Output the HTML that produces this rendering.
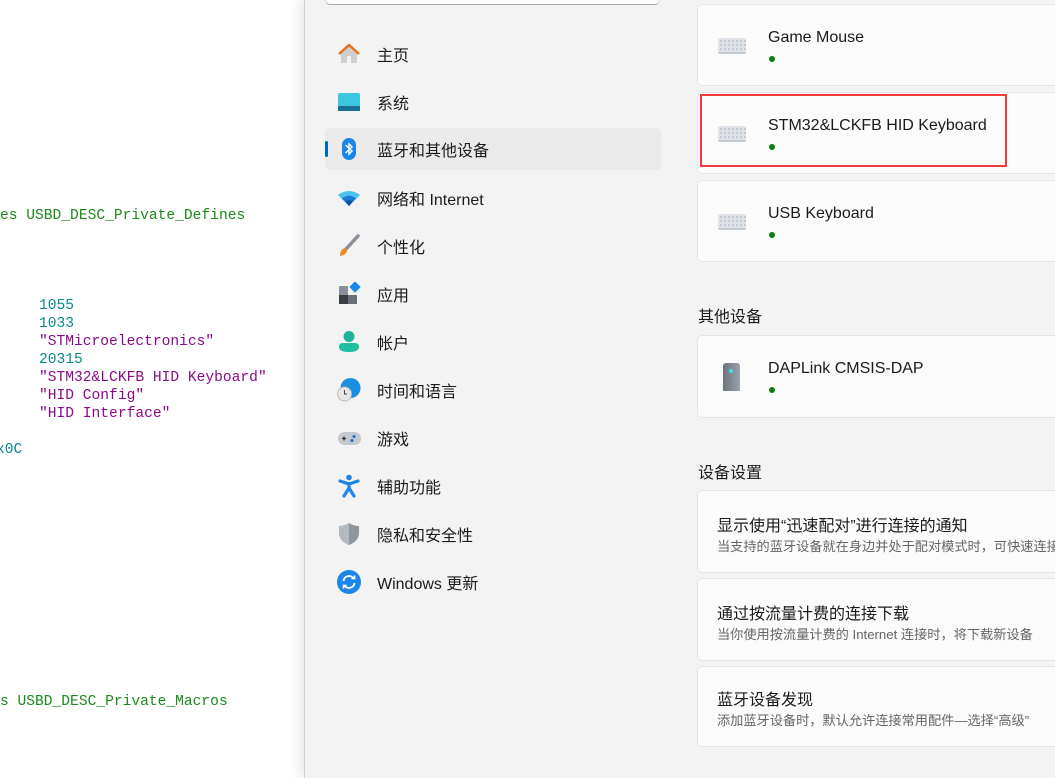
<!DOCTYPE html>
<html><head><meta charset="utf-8"><style>
*{margin:0;padding:0;box-sizing:border-box}
body{width:1055px;height:778px;overflow:hidden;position:relative;background:#fff;font-family:"Liberation Sans","Noto Sans CJK SC",sans-serif}
.code{position:absolute;left:0;top:0;width:305px;height:778px;background:#fff;font-family:"Liberation Mono","Noto Sans CJK SC",monospace;font-size:14.6px;white-space:pre}
.code div{position:absolute;line-height:18px}
.g{color:#1a8a1a}.t{color:#0a8a8a}.p{color:#8a0a8a}
.win{position:absolute;left:304px;top:0;width:751px;height:778px;background:#f3f3f3;border-left:1px solid #d0d0d0;box-shadow:-6px 0 10px rgba(0,0,0,.08)}
.search{position:absolute;left:20px;top:-10px;width:335px;height:15px;background:#fbfbfb;border:1px solid #dcdcdc;border-radius:5px;border-bottom-color:#aaa}
.nav{position:absolute;left:20px;width:336px;height:42px;font-size:16px;color:#1b1b1b}
.nav span{position:absolute;left:52px;top:9px}
.nav .ic{position:absolute;left:12px;top:9px;width:24px;height:24px}
.sel{background:#eaeaea;border-radius:5px}
.sel:before{content:"";position:absolute;left:0;top:13px;width:3px;height:16px;background:#0067c0;border-radius:2px}
.card{position:absolute;left:392px;width:380px;background:#fbfbfb;border:1px solid #e5e5e5;border-radius:5px}
.card .nm{position:absolute;left:70px;font-size:16px;color:#1b1b1b}
.dot{position:absolute;left:71px;width:6px;height:6px;border-radius:50%;background:#0f7b0f}
.kb{position:absolute;left:20px;width:28px;height:16px;background:#dfe3e8;border-radius:2px;border-bottom:2px solid #c4cad2;background-image:radial-gradient(circle,#b8c0c9 0.8px,transparent 1px);background-size:4px 4px;background-position:1px 1px}
.h{position:absolute;left:393px;font-size:16px;color:#1b1b1b}
.st{position:absolute;left:19px;font-size:16px;color:#1b1b1b}
.sd{position:absolute;left:19px;font-size:13.2px;color:#666;white-space:nowrap}
</style></head><body>
<div class="code">
<div class="g" style="left:0;top:207px">es USBD_DESC_Private_Defines</div>
<div class="t" style="left:39px;top:297px">1055</div>
<div class="t" style="left:39px;top:315px">1033</div>
<div class="p" style="left:39px;top:333px">"STMicroelectronics"</div>
<div class="t" style="left:39px;top:351px">20315</div>
<div class="p" style="left:39px;top:369px">"STM32&amp;LCKFB HID Keyboard"</div>
<div class="p" style="left:39px;top:387px">"HID Config"</div>
<div class="p" style="left:39px;top:405px">"HID Interface"</div>
<div class="t" style="left:-4px;top:441px">x0C</div>
<div class="g" style="left:0;top:693px">s USBD_DESC_Private_Macros</div>
</div>
<div class="win">
<div class="search"></div>
<div class="nav" style="top:33px"><svg class="ic" viewBox="0 0 24 24"><path d="M4 11 L12 4 L20 11 V21 H4Z" fill="#cfcfcf"/><rect x="10" y="14" width="4" height="7" fill="#f3f3f3"/><path d="M2 12 L12 3 L22 12" fill="none" stroke="#e8701a" stroke-width="2.5"/></svg><span>主页</span></div>
<div class="nav" style="top:81px"><svg class="ic" viewBox="0 0 24 24"><rect x="1" y="3" width="22" height="18" rx="2" fill="#3cc6e0"/><rect x="1" y="16" width="22" height="5" fill="#1a6f99"/></svg><span>系统</span></div>
<div class="nav sel" style="top:128px"><svg class="ic" viewBox="0 0 24 24"><rect x="5" y="1" width="14" height="22" rx="7" fill="#1a86e8"/><path d="M8.5 8 L15 14 L12 17 V7 L15 10 L8.5 16" fill="none" stroke="#fff" stroke-width="1.4"/></svg><span>蓝牙和其他设备</span></div>
<div class="nav" style="top:177px"><svg class="ic" viewBox="0 0 24 24"><path d="M1 9 Q12 1 23 9 L12 20Z" fill="#4cc2f0"/><path d="M5 12.5 Q12 7 19 12.5 L12 20Z" fill="#1a7ad8"/><path d="M8.5 15.5 Q12 13 15.5 15.5 L12 20Z" fill="#0d4ea0"/></svg><span>网络和 Internet</span></div>
<div class="nav" style="top:225px"><svg class="ic" viewBox="0 0 24 24"><path d="M21 2 L9 15" stroke="#8a8f99" stroke-width="3.5" stroke-linecap="round"/><path d="M8 14 Q3 15 3 22 Q9 21 10 17Z" fill="#f08a1a"/></svg><span>个性化</span></div>
<div class="nav" style="top:273px"><svg class="ic" viewBox="0 0 24 24"><rect x="2" y="4" width="9" height="9" fill="#8a8f99"/><rect x="2" y="13" width="9" height="9" fill="#3a3f45"/><rect x="11" y="13" width="9" height="9" fill="#6a6f78"/><rect x="14" y="1" width="8" height="8" fill="#1a86e8" transform="rotate(45 18 5)"/></svg><span>应用</span></div>
<div class="nav" style="top:321px"><svg class="ic" viewBox="0 0 24 24"><circle cx="12" cy="6.5" r="5.5" fill="#20b39a"/><path d="M2 17 Q2 13 6 13 H18 Q22 13 22 17 Q22 22 12 22 Q2 22 2 17Z" fill="#1ec0a0"/></svg><span>帐户</span></div>
<div class="nav" style="top:369px"><svg class="ic" viewBox="0 0 24 24"><circle cx="13.5" cy="10" r="10" fill="#1a8ee0"/><circle cx="7.5" cy="16" r="7" fill="#e6e6e6" stroke="#bbb"/><path d="M7.5 12 V16 H10" stroke="#444" fill="none"/></svg><span>时间和语言</span></div>
<div class="nav" style="top:417px"><svg class="ic" viewBox="0 0 24 24"><rect x="1" y="6" width="23" height="13" rx="6.5" fill="#c5c8cd"/><path d="M5 12.5h4M7 10.5v4" stroke="#333" stroke-width="1.3"/><circle cx="17" cy="10.5" r="1.5" fill="#1a6fd8"/><circle cx="15" cy="14.5" r="1.5" fill="#1a6fd8"/></svg><span>游戏</span></div>
<div class="nav" style="top:465px"><svg class="ic" viewBox="0 0 24 24"><circle cx="12" cy="3.5" r="2.8" fill="#1a86e8"/><path d="M3 7 L12 10 L21 7 M12 10 V14 L7 22 M12 14 L17 22" stroke="#1a86e8" stroke-width="3.2" fill="none" stroke-linecap="round"/></svg><span>辅助功能</span></div>
<div class="nav" style="top:513px"><svg class="ic" viewBox="0 0 24 24"><path d="M12 1 Q17 4 22 4 V11 Q22 19 12 23 Q2 19 2 11 V4 Q7 4 12 1Z" fill="#8f959c"/><path d="M12 1 V23 Q2 19 2 11 V4 Q7 4 12 1Z" fill="#b5bac0"/></svg><span>隐私和安全性</span></div>
<div class="nav" style="top:561px"><svg class="ic" viewBox="0 0 24 24"><circle cx="12" cy="12" r="12" fill="#1a86e8"/><path d="M6.5 11 A5.5 5.5 0 0 1 16.5 8.5 M17.5 13 A5.5 5.5 0 0 1 7.5 15.5" stroke="#fff" stroke-width="1.8" fill="none"/><path d="M14.5 8.5 H17.5 V5.5 M9.5 15.5 H6.5 V18.5" stroke="#fff" stroke-width="1.8" fill="none"/></svg><span>Windows 更新</span></div>

<div class="card" style="top:4px;height:82px"><div class="kb" style="top:33px"></div><div class="nm" style="top:24px">Game Mouse</div><div class="dot" style="top:51px"></div></div>
<div class="card" style="top:92px;height:82px"><div class="kb" style="top:33px"></div><div class="nm" style="top:24px">STM32&amp;LCKFB HID Keyboard</div><div class="dot" style="top:51px"></div></div>
<div class="card" style="top:180px;height:82px"><div class="kb" style="top:33px"></div><div class="nm" style="top:24px">USB Keyboard</div><div class="dot" style="top:51px"></div></div>
<div style="position:absolute;left:395px;top:94px;width:307px;height:73px;border:2px solid #f03a3a"></div>
<div class="h" style="top:303px">其他设备</div>
<div class="card" style="top:335px;height:83px"><div style="position:absolute;left:25px;top:27px;width:17px;height:28px;background:linear-gradient(90deg,#6c737c,#9aa1aa);border-radius:3px 3px 1px 1px"></div><div style="position:absolute;left:31px;top:33px;width:4px;height:4px;background:#3ee0f0;border-radius:50%"></div><div class="nm" style="top:24px">DAPLink CMSIS-DAP</div><div class="dot" style="top:51px"></div></div>
<div class="h" style="top:459px">设备设置</div>
<div class="card" style="top:490px;height:83px;overflow:hidden"><div class="st" style="top:21px">显示使用“迅速配对”进行连接的通知</div><div class="sd" style="top:45px">当支持的蓝牙设备就在身边并处于配对模式时，可快速连接</div></div>
<div class="card" style="top:578px;height:83px;overflow:hidden"><div class="st" style="top:21px">通过按流量计费的连接下载</div><div class="sd" style="top:45px">当你使用按流量计费的 Internet 连接时，将下载新设备</div></div>
<div class="card" style="top:666px;height:81px;overflow:hidden"><div class="st" style="top:19px">蓝牙设备发现</div><div class="sd" style="top:43px">添加蓝牙设备时，默认允许连接常用配件—选择“高级”</div></div>
</div>
</body></html>
